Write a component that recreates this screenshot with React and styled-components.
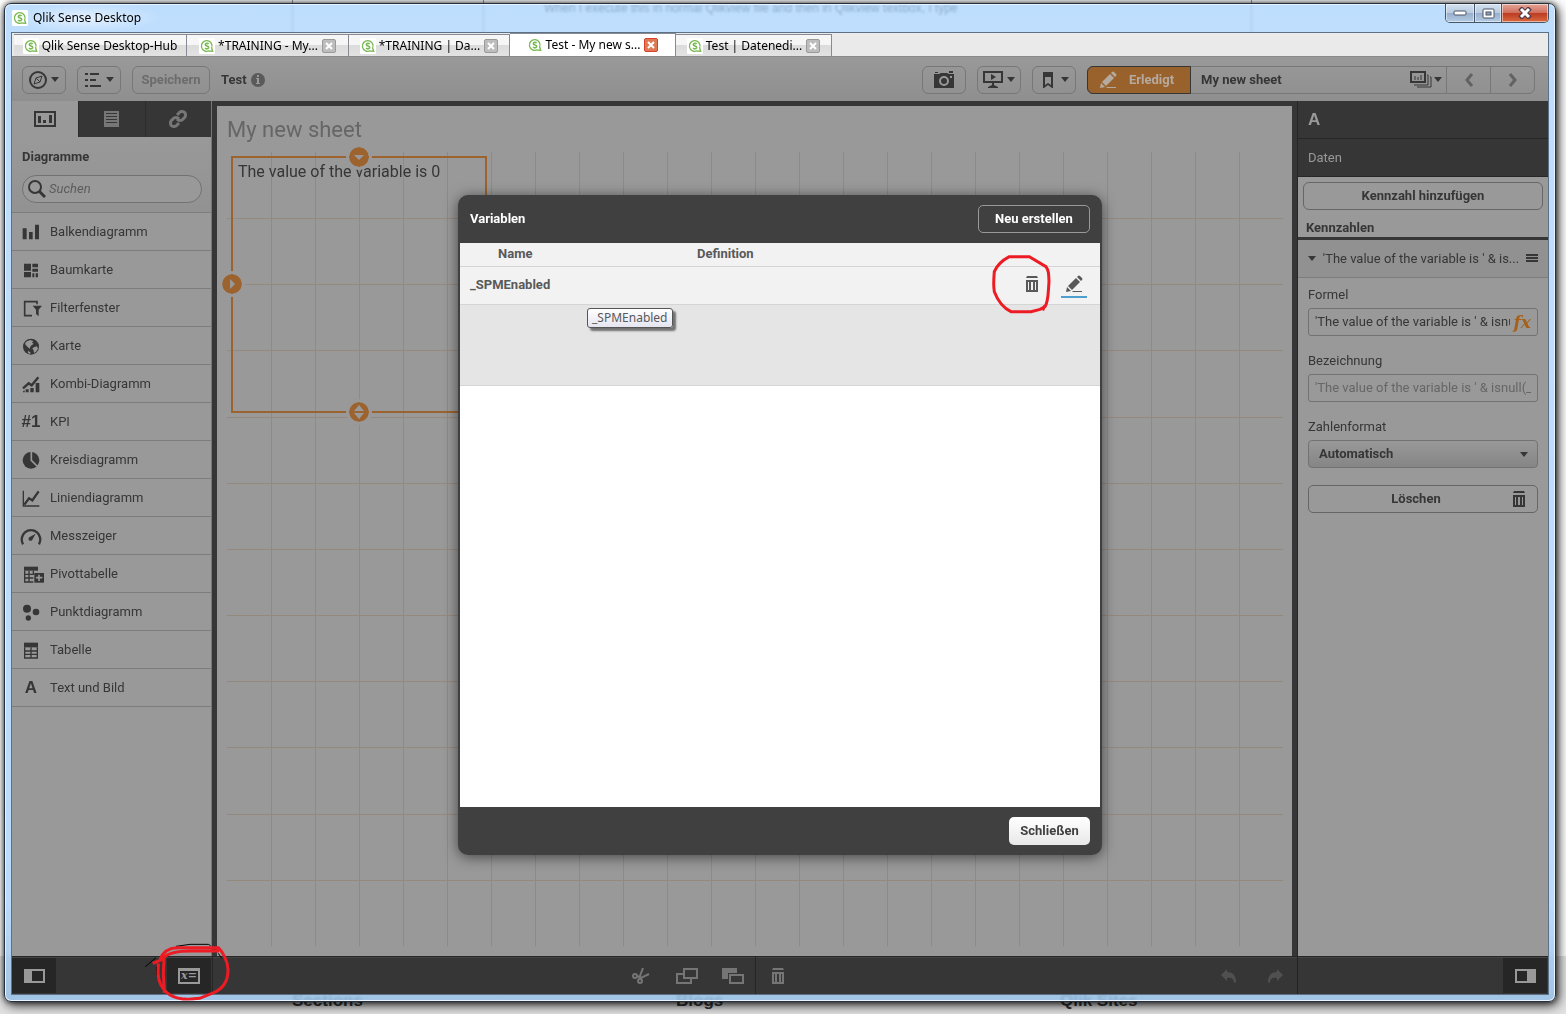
import React from "react";
import styled, { createGlobalStyle } from "styled-components";

const ink = "#363636";

const chartTypes = [
  { name: "Balkendiagramm", icon: "bar" },
  { name: "Baumkarte", icon: "treemap" },
  { name: "Filterfenster", icon: "filter" },
  { name: "Karte", icon: "map" },
  { name: "Kombi-Diagramm", icon: "combo" },
  { name: "KPI", glyph: "#1" },
  { name: "Kreisdiagramm", icon: "pie" },
  { name: "Liniendiagramm", icon: "line" },
  { name: "Messzeiger", icon: "gauge" },
  { name: "Pivottabelle", icon: "pivot" },
  { name: "Punktdiagramm", icon: "scatter" },
  { name: "Tabelle", icon: "table" },
  { name: "Text und Bild", glyph: "A" },
];

const tabs = [
  { name: "Qlik Sense Desktop-Hub", width: 173 },
  { name: "*TRAINING - My...", width: 162, closable: true },
  { name: "*TRAINING | Da...", width: 161, closable: true },
  { name: "Test - My new s...", width: 166, closable: true, active: true },
  { name: "Test | Datenedi...", width: 156, closable: true },
];

const chartShapes = {
  bar: <path d="M8 16h12v33H8zM27 27h11v22H27zM45 5h12v44H45z" />,
  treemap: (
    <path d="M12 8h21v21H12zM12 33h21v16H12zM37 8h17v11H37zM37 23h17v9H37zM37 37h6v12h-6zM47 37h7v12h-7z" />
  ),
  filter: (
    <>
      <path d="M51 16V8H14v42h22" fill="none" stroke={ink} strokeWidth="5" />
      <path d="M38 20h28L56 32v20l-8-7V32z" />
    </>
  ),
  map: (
    <>
      <circle cx="33" cy="29" r="24" />
      <path
        d="M18 14l12-5 10 3-4 5 5 3-9 7-3 8-7-6-7-8zM41 31l10-3 3 7-6 9-6 4-1-8-4-5zM24 41l8 6-2 4-6-3z"
        fill="#999"
      />
    </>
  ),
  combo: (
    <>
      <path d="M9 40l17-15 9 6L55 7" fill="none" stroke={ink} strokeWidth="7" />
      <path d="M17 43h9v9h-9zM31 39h10v13H31zM47 24h11v28H47zM9 49l5-3v6H9z" />
    </>
  ),
  pie: (
    <>
      <circle cx="33" cy="28" r="25" />
      <path d="M34 0v28l20 20" fill="none" stroke="#999" strokeWidth="5" />
    </>
  ),
  line: (
    <>
      <path d="M10 5v46h48" fill="none" stroke={ink} strokeWidth="4" />
      <path d="M13 47l14-19 10 6L56 7" fill="none" stroke={ink} strokeWidth="7" />
    </>
  ),
  gauge: (
    <>
      <path d="M9 52A28 28 0 1 1 57 52" fill="none" stroke={ink} strokeWidth="7" />
      <path d="M47 20L37 38a6 6 0 1 1-8-8z" />
    </>
  ),
  pivot: (
    <>
      <path d="M12 5h42v12H12z" />
      <path d="M14 17v34h26M14 28h28M14 39h26M27 17v34M40 17v10" fill="none" stroke={ink} strokeWidth="4" />
      <path d="M43 24h29v29H43z" />
      <path d="M57 29v19M48 38h19" stroke="#999" strokeWidth="5" />
    </>
  ),
  scatter: (
    <>
      <circle cx="21" cy="17" r="12" />
      <circle cx="48" cy="27" r="10" />
      <circle cx="25" cy="45" r="8" />
    </>
  ),
  table: (
    <>
      <path d="M12 5h42v14H12z" />
      <path d="M14 19v32h38V19M12 30h42M12 40h42M33 19v32" fill="none" stroke={ink} strokeWidth="4" />
    </>
  ),
};

const ChartIcon = ({ name }) => (
  <svg width="24" height="18" viewBox="0 0 72 54" fill={ink}>
    {chartShapes[name]}
  </svg>
);

const QlikLogo = () => (
  <svg width="16" height="16" viewBox="0 0 48 48" fill="none" stroke="#7ab953">
    <rect width="48" height="48" rx="4" fill="#fff" stroke="none" />
    <path d="M31 38A16 16 0 1 1 38 30L41 40L30 39" strokeWidth="4" />
    <path d="M29 18c-3-3-10-3-10 2s10 3 10 8-7 6-11 2" strokeWidth="5" />
  </svg>
);

const Cross = () => (
  <svg width="8" height="8" viewBox="0 0 8 8" stroke="#fff" strokeWidth="2">
    <path d="M1 1l6 6M7 1L1 7" />
  </svg>
);

const Caret = () => (
  <svg width="8" height="5" viewBox="0 0 8 5" fill={ink}>
    <path d="M0 0h8L4 5z" />
  </svg>
);

const TrashIcon = ({ color = ink }) => (
  <svg width="12" height="16" viewBox="0 0 12 16" fill={color}>
    <path d="M1 0h10l1 2H0z" />
    <path fillRule="evenodd" d="M0 4h12v12H0zM2 6v8h1V6zM5 6v8h2V6zM9 6v8h1V6z" />
  </svg>
);

const PencilIcon = ({ color = "#595959" }) => (
  <svg width="18" height="18" viewBox="0 0 18 18" fill={color}>
    <path d="M11 3l4 4-8 8-4-4zM12 2l1-1q1-1 2 0l2 2q1 1 0 2l-1 1zM2 12l4 4-5 1zM8 16h9v1H7z" />
  </svg>
);

const App = () => {
  return (
    <Desktop>
      <GlobalStyle />
      <Backdrop aria-hidden="true">
        <BackdropPost>
          When I execute this in normal Qlikview file and then in Qlikview textbox, I type
        </BackdropPost>
        <BackdropFooter>
          <span>Sections</span>
          <span>Blogs</span>
          <span>Qlik Sites</span>
        </BackdropFooter>
      </Backdrop>
      <AppWindow>
        <TitleBar>
          <WindowTitle>
            <QlikLogo />
            <span>Qlik Sense Desktop</span>
          </WindowTitle>
          <WindowControls>
            <WindowButton $width={28} aria-label="Minimieren">
              <svg width="14" height="6" viewBox="0 0 14 6">
                <rect x="1" y="1" width="12" height="4" rx="1" fill="#fff" stroke="#4b5565" />
              </svg>
            </WindowButton>
            <WindowButton $width={27} aria-label="Maximieren">
              <svg width="13" height="11" viewBox="0 0 13 11">
                <rect x="1" y="1" width="11" height="9" rx="1" fill="#fff" stroke="#4b5565" />
                <rect x="4" y="4" width="5" height="3" fill="#8fa3bd" stroke="#4b5565" />
              </svg>
            </WindowButton>
            <WindowButton $width={47} $close aria-label="Schließen">
              <svg width="14" height="12" viewBox="0 0 14 12">
                <path d="M2 1l10 10M12 1L2 11" stroke="#4b3a48" strokeWidth="5" />
                <path d="M3 2l8 8M11 2l-8 8" stroke="#fff" strokeWidth="3" />
              </svg>
            </WindowButton>
          </WindowControls>
        </TitleBar>
        <Client>
          <TabStrip>
            {tabs.map((tab) => (
              <Tab key={tab.name} $width={tab.width} $active={tab.active}>
                <TabLabel>
                  <QlikLogo />
                  {tab.name}
                </TabLabel>
                {tab.closable && (
                  <TabClose $active={tab.active} aria-label={`${tab.name} schließen`}>
                    <Cross />
                  </TabClose>
                )}
              </Tab>
            ))}
          </TabStrip>
          <Workspace>
            <Toolbar />
            <Main>
              <AssetsPanel />
              <Sheet />
              <PropertiesPanel />
            </Main>
            <Footer />
            <ModalLayer>
              <VariablesDialog />
            </ModalLayer>
            <FooterInk width="88" height="60" viewBox="429 66 264 180" fill="none">
              <path d="M436 140l32-27M528 79l42-6h55l7 4M470 140v25M655 100l10 15" stroke="#000" strokeWidth="3" />
              <path
                d="M458 130l34-14-2 44 3 58M480 118c8-20 26-34 50-35h125c14 14 28 40 29 65 1 40-20 62-50 73l-35 14c-30 4-68 3-90-11-24-16-34-40-35-64l1-30M492 112c16-15 50-19 80-19h85"
                stroke="#ed1c24"
                strokeWidth="9"
              />
            </FooterInk>
          </Workspace>
        </Client>
      </AppWindow>
    </Desktop>
  );
};

const Toolbar = () => (
  <ToolbarRow>
    <ToolButton aria-label="Navigation">
      <svg width="18" height="18" viewBox="0 0 18 18" fill="none" stroke={ink} strokeWidth="2">
        <circle cx="9" cy="9" r="8" />
        <path d="M13 5l-2 6-6 2 2-6zM7 7l4 4" strokeWidth="1" />
      </svg>
      <Caret />
    </ToolButton>
    <ToolButton aria-label="Menü">
      <svg width="18" height="14" viewBox="0 0 18 14" fill={ink}>
        <path d="M1 0h3v2H1zM6 0h9v2H6zM1 6h3v2H1zM6 6h6v2H6zM1 12h3v2H1zM6 12h11v2H6z" />
      </svg>
      <Caret />
    </ToolButton>
    <SaveButton disabled>Speichern</SaveButton>
    <AppName>
      Test
      <svg width="14" height="14" viewBox="0 0 14 14">
        <circle cx="7" cy="7" r="7" fill="#5a5a5a" />
        <path d="M6 2h2v2H6zM5 5h3v5h1v1H5v-1h1V6H5z" fill="#999" />
      </svg>
    </AppName>
    <ToolButton aria-label="Schnappschüsse">
      <svg width="22" height="18" viewBox="0 0 22 18" fill={ink}>
        <path d="M1 3h5l2-1h6l2 1h5v14H1zM16 0h4v2h-4zM2 1h3v1H2z" />
        <circle cx="11" cy="10" r="4" fill="none" stroke="#999" strokeWidth="2" />
        <path d="M17 5h2v2h-2z" fill="#999" />
      </svg>
    </ToolButton>
    <ToolButton aria-label="Story">
      <svg width="20" height="17" viewBox="0 0 20 17" fill={ink}>
        <path fillRule="evenodd" d="M0 0h20v12h-9v2l4 2v1H5v-1l4-2v-2H0zM2 2v8h16V2z" />
        <path d="M8 3l5 3-5 3z" />
      </svg>
      <Caret />
    </ToolButton>
    <ToolButton aria-label="Lesezeichen">
      <svg width="18" height="16" viewBox="0 0 18 16" fill={ink}>
        <path fillRule="evenodd" d="M4 0h10v16h-1l-4-3-4 3H4zM6 5v8l3-2 3 2V5z" />
      </svg>
      <Caret />
    </ToolButton>
    <SheetNav>
      <DoneButton>
        <PencilIcon color="#b5aa9f" />
        Erledigt
      </DoneButton>
      <SheetName>
        My new sheet
        <SheetPicker aria-label="Arbeitsblätter">
          <svg width="22" height="17" viewBox="0 0 22 17" fill="none" stroke={ink} strokeWidth="2">
            <path d="M1 1h14v10H1z" />
            <path d="M17 4h1v10H4M20 6h1v10H7" strokeWidth="1" />
            <path d="M5 9V5M8 9V6M11 9V4" strokeWidth="1" />
          </svg>
          <Caret />
        </SheetPicker>
      </SheetName>
      <NavButton aria-label="Zurück">
        <svg width="10" height="14" viewBox="0 0 10 14" fill="none" stroke="#626262" strokeWidth="3">
          <path d="M8 1L3 7l5 6" />
        </svg>
      </NavButton>
      <NavButton aria-label="Weiter">
        <svg width="10" height="14" viewBox="0 0 10 14" fill="none" stroke="#626262" strokeWidth="3">
          <path d="M2 1l5 6-5 6" />
        </svg>
      </NavButton>
    </SheetNav>
  </ToolbarRow>
);

const AssetsPanel = () => (
  <Assets>
    <AssetTabs>
      <AssetTab $active aria-label="Diagramme">
        <svg width="22" height="16" viewBox="0 0 22 16" fill={ink}>
          <path fillRule="evenodd" d="M0 0h22v16H0zM2 2v12h18V2z" />
          <path d="M4 5h3v7H4zM9 9h3v3H9zM15 4h3v8h-3z" />
        </svg>
      </AssetTab>
      <AssetTab aria-label="Felder">
        <svg width="15" height="16" viewBox="0 0 15 16" fill="#777">
          <path fillRule="evenodd" d="M0 0h15v16H0zM2 2v1h11V2zM2 5v1h11V5zM2 8v1h11V8zM2 11v1h11v-1z" />
        </svg>
      </AssetTab>
      <AssetTab aria-label="Verknüpfungen">
        <svg width="18" height="18" viewBox="0 0 18 18" fill="none" stroke="#777" strokeWidth="3">
          <path d="M8 5l3-3q2-1 4 0l1 1q1 2 0 4l-3 3q-2 1-4 0L8 9M10 13l-3 3q-2 1-4 0l-1-1q-1-2 0-4l3-3q2-1 4 0l1 1" />
        </svg>
      </AssetTab>
    </AssetTabs>
    <AssetSearch>
      <h2>Diagramme</h2>
      <SearchBox>
        <svg width="18" height="18" viewBox="0 0 18 18" fill="none" stroke={ink}>
          <circle cx="7" cy="7" r="6" strokeWidth="2" />
          <path d="M11 11l6 6" strokeWidth="3" />
        </svg>
        <input type="search" placeholder="Suchen" aria-label="Diagramme suchen" />
      </SearchBox>
    </AssetSearch>
    <ChartList>
      {chartTypes.map((chart) => (
        <ChartRow key={chart.name}>
          {chart.icon ? <ChartIcon name={chart.icon} /> : <Glyph>{chart.glyph}</Glyph>}
          {chart.name}
        </ChartRow>
      ))}
    </ChartList>
  </Assets>
);

const Sheet = () => (
  <SheetArea>
    <SheetTitle>My new sheet</SheetTitle>
    <SheetGrid>
      <GridColumns>
        {Array.from({ length: 24 }, (_, i) => (
          <i key={i} />
        ))}
      </GridColumns>
      <GridRows>
        {Array.from({ length: 12 }, (_, i) => (
          <i key={i} />
        ))}
      </GridRows>
      <TextObject>
        The value of the variable is 0
        <Handle $side="top">
          <path d="M5 8h10l-5 5z" />
        </Handle>
        <Handle $side="left">
          <path d="M8 5v10l5-5z" />
        </Handle>
        <Handle $side="bottom">
          <path d="M5 9h10l-5-6zM5 11h10l-5 6z" />
        </Handle>
      </TextObject>
    </SheetGrid>
  </SheetArea>
);

const Handle = ({ $side, children }) => (
  <HandleIcon $side={$side} width="20" height="20" viewBox="0 0 20 20">
    <circle cx="10" cy="10" r="10" fill="#9c632e" />
    <g fill="#999">{children}</g>
  </HandleIcon>
);

const PropertiesPanel = () => (
  <Properties>
    <ObjectType>A</ObjectType>
    <DataHeader>Daten</DataHeader>
    <AddMeasure>
      <OutlineButton>Kennzahl hinzufügen</OutlineButton>
    </AddMeasure>
    <MeasuresTitle>Kennzahlen</MeasuresTitle>
    <MeasureHeader>
      <Caret />
      <span>'The value of the variable is ' &amp; is...</span>
      <svg width="12" height="9" viewBox="0 0 12 9" fill={ink}>
        <path d="M0 0h12v2H0zM0 3h12v2H0zM0 6h12v2H0z" />
      </svg>
    </MeasureHeader>
    <MeasureForm>
      <Field>
        <label htmlFor="formula">Formel</label>
        <TextBox>
          <input
            id="formula"
            defaultValue="'The value of the variable is ' & isnull(_SPMEnabled)"
          />
          <FxButton aria-label="Formeleditor">fx</FxButton>
        </TextBox>
      </Field>
      <Field>
        <label htmlFor="label">Bezeichnung</label>
        <TextBox>
          <input id="label" placeholder="'The value of the variable is ' & isnull(_SPMEnabled)" />
        </TextBox>
      </Field>
      <Field>
        <label htmlFor="format">Zahlenformat</label>
        <SelectBox>
          <select id="format" defaultValue="auto">
            <option value="auto">Automatisch</option>
          </select>
          <Caret />
        </SelectBox>
      </Field>
      <DeleteButton>
        <span>Löschen</span>
        <TrashIcon />
      </DeleteButton>
    </MeasureForm>
  </Properties>
);

const Footer = () => (
  <FooterBar>
    <FooterSide>
      <FooterButton $dark aria-label="Linken Bereich ausblenden">
        <svg width="21" height="14" viewBox="0 0 21 14">
          <path fillRule="evenodd" d="M0 0h21v14H0zM8 2v10h11V2z" fill="#999" />
        </svg>
      </FooterButton>
      <FooterButton $dark aria-label="Variablen">
        <VariableBadge>x=</VariableBadge>
      </FooterButton>
    </FooterSide>
    <FooterTools>
      <FooterButton aria-label="Ausschneiden">
        <svg width="18" height="16" viewBox="0 0 18 16" fill="none" stroke="#757575" strokeWidth="2">
          <circle cx="3" cy="8" r="2" />
          <circle cx="8" cy="13" r="2" />
          <path d="M5 8l4 2 8-4M8 11V8l3-8" />
        </svg>
      </FooterButton>
      <FooterButton aria-label="Kopieren">
        <svg width="22" height="16" viewBox="0 0 22 16" fill={ink} stroke="#757575" strokeWidth="2">
          <path d="M1 6h14v9H1z" />
          <path d="M8 1h13v9H8z" />
        </svg>
      </FooterButton>
      <FooterButton aria-label="Einfügen">
        <svg width="22" height="16" viewBox="0 0 22 16" stroke="#757575" strokeWidth="2">
          <path d="M1 1h13v9H1z" fill="#757575" />
          <path d="M6 5h16v11H6z" fill={ink} stroke="none" />
          <path d="M8 7h13v8H8z" fill={ink} />
        </svg>
      </FooterButton>
    </FooterTools>
    <FooterTools $right>
      <FooterButton aria-label="Löschen">
        <TrashIcon color="#757575" />
      </FooterButton>
      <History>
        <FooterButton aria-label="Rückgängig">
          <svg width="16" height="14" viewBox="0 0 16 14" fill="#505050">
            <path d="M0 6l6-6v3c6 0 9 4 9 10l-2 1c0-4-2-6-7-5v3z" />
          </svg>
        </FooterButton>
        <FooterButton aria-label="Wiederherstellen">
          <svg width="16" height="14" viewBox="0 0 16 14" fill="#505050">
            <path d="M16 6l-6-6v3C4 3 1 7 1 13l2 1c0-4 2-6 7-5v3z" />
          </svg>
        </FooterButton>
      </History>
    </FooterTools>
    <FooterSide $right>
      <FooterButton $dark aria-label="Rechten Bereich ausblenden">
        <svg width="21" height="14" viewBox="0 0 21 14">
          <path fillRule="evenodd" d="M0 0h21v14H0zM2 2v10h10V2z" fill="#999" />
        </svg>
      </FooterButton>
    </FooterSide>
  </FooterBar>
);

const VariablesDialog = () => (
  <Dialog role="dialog" aria-labelledby="dialog-title">
    <DialogBar>
      <h2 id="dialog-title">Variablen</h2>
      <CreateButton>Neu erstellen</CreateButton>
    </DialogBar>
    <DialogBody>
      <VariableTable>
        <thead>
          <tr>
            <th scope="col">Name</th>
            <th scope="col">Definition</th>
            <th aria-label="Aktionen" />
          </tr>
        </thead>
        <tbody>
          <tr>
            <td>_SPMEnabled</td>
            <td />
            <td>
              <RowActions>
                <RowButton aria-label="Löschen">
                  <TrashIcon color="#595959" />
                </RowButton>
                <RowButton $focused aria-label="Bearbeiten">
                  <PencilIcon />
                </RowButton>
              </RowActions>
            </td>
          </tr>
        </tbody>
      </VariableTable>
      <VariableDetail />
      <Tooltip role="tooltip">_SPMEnabled</Tooltip>
      <RowInk width="61" height="61" viewBox="275 220 183 183" fill="none">
        <path
          d="M330 228h60l50 30c8 12 8 20 9 45-3 40-2 60-12 75l-15 8-27 7h-60c-28-14-40-34-50-60-4-25-1-45 0-60 8-20 24-34 45-45zM436 375l-6 14"
          stroke="#ed1c24"
          strokeWidth="9"
        />
      </RowInk>
    </DialogBody>
    <DialogBar $bottom>
      <CloseButton>Schließen</CloseButton>
    </DialogBar>
  </Dialog>
);

export default App;

const GlobalStyle = createGlobalStyle`
  * {
    box-sizing: border-box;
  }
  body {
    margin: 0;
    font-family: Roboto, "Liberation Sans", sans-serif;
    font-size: 13px;
    line-height: 16px;
    color: ${ink};
  }
  button, input, select {
    font: inherit;
    color: inherit;
    margin: 0;
    padding: 0;
    border: 0;
    background: none;
    outline: none;
  }
  h1, h2, h3, ul {
    margin: 0;
    padding: 0;
    font-size: inherit;
  }
  svg {
    display: block;
    flex: none;
  }
`;

const Desktop = styled.div`
  position: relative;
  min-height: 100vh;
  display: flex;
  padding: 3px 10px 12px 4px;
  overflow: hidden;
  background: #fff;
`;

const Backdrop = styled.div`
  position: absolute;
  inset: 0;
  display: flex;
  flex-direction: column;
  justify-content: space-between;
  font-family: "Liberation Sans", sans-serif;
  background: linear-gradient(
    90deg,
    transparent 292px,
    #999 292px 293px,
    transparent 293px 483px,
    #999 483px 484px,
    transparent 484px 1251px,
    #999 1251px 1252px,
    transparent 1252px
  );
`;

const BackdropPost = styled.p`
  margin: 0;
  padding-left: 544px;
  white-space: nowrap;
  font-size: 12px;
  color: #000;
`;

const BackdropFooter = styled.div`
  display: grid;
  grid-template-columns: 384px 384px 1fr;
  height: 58px;
  padding: 35px 0 0 292px;
  background: #e2e2e2;
  font-size: 17px;
  line-height: 20px;
  font-weight: bold;
`;

const AppWindow = styled.div`
  position: relative;
  flex: 1;
  min-width: 0;
  display: flex;
  flex-direction: column;
  padding: 0 6px 6px;
  border: 1px solid #25303c;
  border-radius: 7px;
  background: linear-gradient(rgba(174, 213, 253, 0.8), rgba(174, 213, 253, 0.85) 90%, rgba(152, 192, 230, 0.88));
  backdrop-filter: blur(1px);
  box-shadow: inset 0 0 0 1px #e9f4ff, 0 0 5px rgba(0, 0, 0, 0.6), 2px 3px 12px rgba(0, 0, 0, 0.85);
`;

const TitleBar = styled.header`
  height: 28px;
  display: flex;
  justify-content: space-between;
`;

const WindowTitle = styled.div`
  display: flex;
  align-items: center;
  gap: 5px;
  padding: 0 20px 0 1px;
  font-family: "Noto Sans", sans-serif;
  font-size: 12px;
  color: #000;
  background: radial-gradient(ellipse, rgba(255, 255, 255, 0.6), transparent 70%);
`;

const WindowControls = styled.div`
  height: 19px;
  display: flex;
  border: 1px solid #46566a;
  border-top: 0;
  border-radius: 0 0 5px 5px;
  overflow: hidden;
`;

const WindowButton = styled.button`
  width: ${(props) => props.$width}px;
  display: flex;
  align-items: center;
  justify-content: center;
  box-shadow: inset 0 0 0 1px rgba(255, 255, 255, 0.5);
  background: ${(props) =>
    props.$close
      ? "linear-gradient(#e5a497, #d0705e 48%, #bd3a22 50%, #d8693f)"
      : "linear-gradient(#d3e0ef, #b9cbe0 48%, #98afcb 50%, #b4cbe4)"};
  & + & {
    border-left: 1px solid #46566a;
  }
`;

const Client = styled.div`
  flex: 1;
  display: flex;
  flex-direction: column;
  border: 1px solid #5d7186;
`;

const TabStrip = styled.nav`
  height: 23px;
  display: flex;
  align-items: flex-end;
  padding-left: 2px;
  background: #eaeaea;
`;

const Tab = styled.div`
  width: ${(props) => props.$width}px;
  height: ${(props) => (props.$active ? 23 : 22)}px;
  display: flex;
  align-items: center;
  justify-content: center;
  gap: 4px;
  border: 1px solid #898995;
  border-width: 1px 1px 0 0;
  font-family: "Noto Sans", sans-serif;
  font-size: 12px;
  color: #000;
  background: ${(props) =>
    props.$active ? "#fff" : "linear-gradient(#f6f6f6 45%, #dcdcdc 50%, #e2e2e2)"};
`;

const TabLabel = styled.button`
  display: flex;
  align-items: center;
  gap: 3px;
  white-space: nowrap;
`;

const TabClose = styled.button`
  width: 14px;
  height: 14px;
  display: flex;
  align-items: center;
  justify-content: center;
  border: 1px solid ${(props) => (props.$active ? "#d8402a" : "#9a9a9a")};
  border-radius: 2px;
  background: ${(props) => (props.$active ? "#dd7a55" : "#bdbdbd")};
`;

const Workspace = styled.div`
  position: relative;
  flex: 1;
  display: flex;
  flex-direction: column;
`;

const ToolbarRow = styled.div`
  height: 45px;
  display: flex;
  align-items: center;
  gap: 11px;
  padding: 1px 13px 0 10px;
  border-top: 1px solid #8a8a8a;
  background: linear-gradient(#999, #8f8f8f);
`;

const ToolButton = styled.button`
  width: 44px;
  height: 28px;
  display: flex;
  align-items: center;
  justify-content: center;
  gap: 4px;
  border: 1px solid #777;
  border-radius: 6px;
`;

const SaveButton = styled.button`
  width: 78px;
  height: 28px;
  border: 1px solid #777;
  border-radius: 6px;
  font-weight: bold;
  color: #6c6c6c;
`;

const AppName = styled.div`
  flex: 1;
  display: flex;
  align-items: center;
  gap: 4px;
  font-weight: bold;
`;

const SheetNav = styled.div`
  width: 448px;
  height: 28px;
  display: flex;
  border: 1px solid #777;
  border-radius: 6px;
`;

const DoneButton = styled.button`
  width: 104px;
  display: flex;
  align-items: center;
  gap: 12px;
  padding-left: 11px;
  margin: -1px 0 -1px -1px;
  border: 1px solid ${ink};
  border-radius: 6px 0 0 6px;
  font-weight: bold;
  color: #b5aa9f;
  background: #99622d;
`;

const SheetName = styled.div`
  flex: 1;
  display: flex;
  align-items: center;
  justify-content: space-between;
  padding: 0 4px 0 10px;
  font-weight: bold;
`;

const SheetPicker = styled.button`
  display: flex;
  align-items: center;
  gap: 2px;
`;

const NavButton = styled.button`
  width: 44px;
  display: flex;
  align-items: center;
  justify-content: center;
  border-left: 1px solid #777;
`;

const Main = styled.main`
  flex: 1;
  display: grid;
  grid-template-columns: 200px 1fr 251px;
  background: ${ink};
`;

const Assets = styled.aside`
  border-right: 1px solid #777;
  background: #999;
`;

const AssetTabs = styled.div`
  height: 36px;
  display: grid;
  grid-template-columns: 66px 1fr 1fr;
`;

const AssetTab = styled.button`
  display: flex;
  align-items: center;
  justify-content: center;
  border-left: ${(props) => (props.$active ? "0" : "1px solid #2c2c2c")};
  background: ${(props) => (props.$active ? "#999" : ink)};
`;

const AssetSearch = styled.div`
  height: 76px;
  display: flex;
  flex-direction: column;
  gap: 10px;
  padding: 12px 9px 0 10px;
  border-bottom: 1px solid #7d7d7d;
  background: linear-gradient(#999, #929292);
`;

const SearchBox = styled.label`
  height: 28px;
  display: flex;
  align-items: center;
  gap: 3px;
  padding: 0 5px;
  border: 1px solid #727272;
  border-radius: 14px;
  background: #999;
  input {
    min-width: 0;
    flex: 1;
  }
  input::placeholder {
    font-style: italic;
    color: #5c5c5c;
  }
`;

const ChartList = styled.ul`
  list-style: none;
`;

const ChartRow = styled.li`
  height: 38px;
  display: flex;
  align-items: center;
  gap: 6px;
  padding-left: 8px;
  border-bottom: 1px solid #7d7d7d;
`;

const Glyph = styled.span`
  width: 24px;
  padding-right: 2px;
  text-align: center;
  font-family: "Liberation Sans", sans-serif;
  font-size: 17px;
  font-weight: bold;
`;

const SheetArea = styled.section`
  display: flex;
  flex-direction: column;
  margin: 5px 5px 0;
  padding: 10px 9px 10px 10px;
  background: #999;
`;

const SheetTitle = styled.h1`
  height: 36px;
  font-size: 22px;
  line-height: 28px;
  font-weight: 400;
  color: #666;
`;

const SheetGrid = styled.div`
  position: relative;
  flex: 1;
`;

const GridColumns = styled.div`
  position: absolute;
  inset: 0;
  display: grid;
  grid-template-columns: repeat(24, 1fr);
  i:not(:first-child) {
    border-left: 1px solid #95897e;
  }
`;

const GridRows = styled.div`
  position: absolute;
  inset: 0;
  display: grid;
  grid-template-rows: repeat(12, 1fr);
  i:not(:first-child) {
    border-top: 1px solid #95897e;
  }
`;

const TextObject = styled.div`
  position: absolute;
  top: 4px;
  left: 4px;
  width: calc(25% - 8px);
  height: calc(33.33% - 8px);
  padding: 5px;
  border: 2px solid #9c632e;
  font-size: 16px;
  line-height: 18px;
`;

const handlePlace = {
  top: "top: -11px; left: calc(50% - 10px);",
  left: "left: -11px; top: calc(50% - 10px);",
  bottom: "bottom: -11px; left: calc(50% - 10px);",
};

const HandleIcon = styled.svg`
  position: absolute;
  ${(props) => handlePlace[props.$side]}
  border-radius: 50%;
  box-shadow: 0 0 0 3px #999;
`;

const Properties = styled.aside`
  border-left: 1px solid #262626;
  background: #999;
`;

const ObjectType = styled.div`
  height: 38px;
  padding: 11px 10px;
  border-bottom: 1px solid #272727;
  font-family: "Liberation Sans", sans-serif;
  font-size: 17px;
  font-weight: bold;
  color: #999;
  background: ${ink};
`;

const DataHeader = styled.h2`
  height: 38px;
  padding: 11px 10px;
  border-bottom: 1px solid #272727;
  font-weight: 400;
  color: #999;
  background: ${ink};
`;

const AddMeasure = styled.div`
  padding: 5px;
`;

const OutlineButton = styled.button`
  width: 100%;
  height: 28px;
  border: 1px solid #666;
  border-radius: 6px;
  font-weight: bold;
`;

const MeasuresTitle = styled.h3`
  height: 25px;
  padding: 5px 8px 0;
  border-bottom: 3px solid ${ink};
`;

const MeasureHeader = styled.div`
  height: 38px;
  display: flex;
  align-items: center;
  justify-content: space-between;
  padding: 0 10px;
  border-bottom: 1px solid #7d7d7d;
  background: #919191;
  span {
    white-space: nowrap;
  }
`;

const MeasureForm = styled.form`
  display: flex;
  flex-direction: column;
  gap: 17px;
  padding: 9px 10px;
`;

const Field = styled.div`
  display: flex;
  flex-direction: column;
  gap: 5px;
`;

const TextBox = styled.div`
  height: 28px;
  display: flex;
  align-items: center;
  gap: 4px;
  padding: 0 6px;
  border: 1px solid #727272;
  border-radius: 3px;
  input {
    min-width: 0;
    flex: 1;
  }
  input::placeholder {
    color: #666;
  }
`;

const FxButton = styled.button`
  font-family: "DejaVu Serif", serif;
  font-size: 17px;
  font-weight: bold;
  font-style: italic;
  color: #a5601a;
`;

const SelectBox = styled.div`
  height: 28px;
  display: flex;
  align-items: center;
  padding: 0 9px 0 10px;
  border: 1px solid #727272;
  border-radius: 4px;
  background: linear-gradient(#999, #858585);
  select {
    flex: 1;
    appearance: none;
    font-weight: bold;
  }
`;

const DeleteButton = styled.button`
  height: 28px;
  display: flex;
  align-items: center;
  padding: 0 12px 0 10px;
  border: 1px solid #666;
  border-radius: 5px;
  font-weight: bold;
  span {
    flex: 1;
  }
`;

const FooterBar = styled.footer`
  height: 38px;
  display: grid;
  grid-template-columns: 200px 1fr 1fr 251px;
  border-top: 1px solid #262626;
  background: ${ink};
  box-shadow: inset 0 1px #444;
`;

const FooterSide = styled.div`
  display: flex;
  justify-content: ${(props) => (props.$right ? "flex-end" : "space-between")};
  padding: 1px 1px 1px 0;
  border-left: ${(props) => (props.$right ? "1px solid #222" : "0")};
`;

const VariableBadge = styled.span`
  width: 22px;
  height: 16px;
  border: 2px solid #999;
  border-top-width: 3px;
  font-family: "DejaVu Serif", serif;
  font-size: 11px;
  line-height: 9px;
  font-weight: bold;
  font-style: italic;
  color: #999;
`;

const FooterTools = styled.div`
  display: flex;
  justify-content: ${(props) => (props.$right ? "space-between" : "flex-end")};
  gap: 2px;
  padding: 1px 0;
  border-left: 1px solid #262626;
`;

const History = styled.div`
  display: flex;
  gap: 2px;
`;

const FooterButton = styled.button`
  width: 44px;
  display: flex;
  align-items: center;
  justify-content: center;
  background: ${(props) => (props.$dark ? "#262626" : "none")};
`;

const ModalLayer = styled.div`
  position: absolute;
  inset: 0;
  display: flex;
  align-items: center;
  justify-content: center;
`;

const Dialog = styled.div`
  width: 644px;
  height: 660px;
  display: flex;
  flex-direction: column;
  border-radius: 10px;
  background: #404040;
  box-shadow: 0 2px 14px rgba(0, 0, 0, 0.55);
`;

const DialogBar = styled.div`
  height: 48px;
  display: flex;
  align-items: center;
  justify-content: ${(props) => (props.$bottom ? "flex-end" : "space-between")};
  padding: 0 12px;
  color: #fff;
`;

const CreateButton = styled.button`
  width: 112px;
  height: 28px;
  border: 1px solid #999;
  border-radius: 5px;
  font-weight: bold;
`;

const CloseButton = styled.button`
  width: 81px;
  height: 28px;
  border-radius: 5px;
  font-weight: bold;
  color: #404040;
  background: linear-gradient(#fff, #e8e8e8);
`;

const DialogBody = styled.div`
  position: relative;
  flex: 1;
  margin: 0 2px;
  color: #595959;
  background: #fff;
`;

const VariableTable = styled.table`
  width: 100%;
  table-layout: fixed;
  border-collapse: collapse;
  font-weight: bold;
  background: #f2f2f2;
  tr {
    border-bottom: 1px solid #d5d5d5;
  }
  th {
    height: 23px;
    padding: 0;
    text-align: left;
  }
  th:first-child {
    width: 237px;
    padding-left: 38px;
  }
  td {
    height: 38px;
    padding: 0 10px;
  }
`;

const RowActions = styled.div`
  display: flex;
  justify-content: flex-end;
  gap: 16px;
  padding-right: 3px;
`;

const RowButton = styled.button`
  width: 26px;
  height: 26px;
  display: flex;
  align-items: center;
  justify-content: center;
  border-bottom: 2px solid ${(props) => (props.$focused ? "#4da0cf" : "transparent")};
`;

const VariableDetail = styled.div`
  height: 81px;
  border-bottom: 1px solid #d5d5d5;
  background: #e5e5e5;
`;

const Tooltip = styled.div`
  position: absolute;
  top: 65px;
  left: 127px;
  padding: 1px 4px;
  border: 1px solid #555;
  border-radius: 3px;
  font-family: "Noto Sans", sans-serif;
  font-size: 12px;
  background: linear-gradient(#fff, #e4e5f0);
  box-shadow: 3px 3px 2px rgba(0, 0, 0, 0.5);
`;

const RowInk = styled.svg`
  position: absolute;
  top: 11px;
  right: 48px;
  pointer-events: none;
`;

const FooterInk = styled.svg`
  position: absolute;
  left: 131px;
  bottom: -8px;
  pointer-events: none;
`;
